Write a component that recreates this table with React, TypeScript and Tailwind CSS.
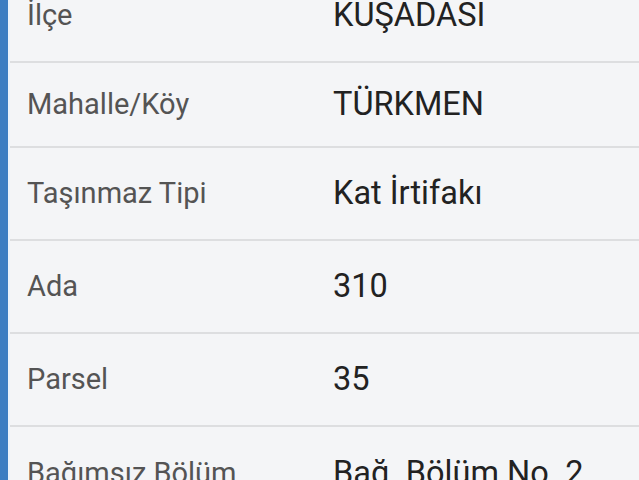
const ROWS: { label: string; value: string; h: string }[] = [
  { label: 'İlçe', value: 'KUŞADASI', h: 'h-[93px]' },
  { label: 'Mahalle/Köy', value: 'TÜRKMEN', h: 'h-[85px]' },
  { label: 'Taşınmaz Tipi', value: 'Kat İrtifakı', h: 'h-[93px]' },
  { label: 'Ada', value: '310', h: 'h-[93px]' },
  { label: 'Parsel', value: '35', h: 'h-[93px]' },
  { label: 'Bağımsız Bölüm', value: 'Bağ. Bölüm No. 2', h: 'h-[93px]' },
]

export default function App() {
  return (
    <div className="flex h-[480px] w-[639px] overflow-hidden bg-[#f4f5f7]" style={{ fontFamily: 'Roboto, "Noto Sans", sans-serif' }}>
      <div className="w-[8px] shrink-0 bg-[#3b7dc2]" />
      <div className="w-[2px] shrink-0 bg-[#eaf2fb]" />
      <div className="-mt-[30px] flex-1">
        {ROWS.map((row, i) => (
          <div
            key={row.label}
            className={`flex ${row.h} items-center ${i < ROWS.length - 1 ? 'border-b-2 border-[#dddee0]' : ''}`}
          >
            <div className="w-[323px] shrink-0 pl-[17px] text-[29px] leading-none text-[#545454]">{row.label}</div>
            <div className="text-[32.5px] leading-none text-[#222222]">{row.value}</div>
          </div>
        ))}
      </div>
    </div>
  )
}
